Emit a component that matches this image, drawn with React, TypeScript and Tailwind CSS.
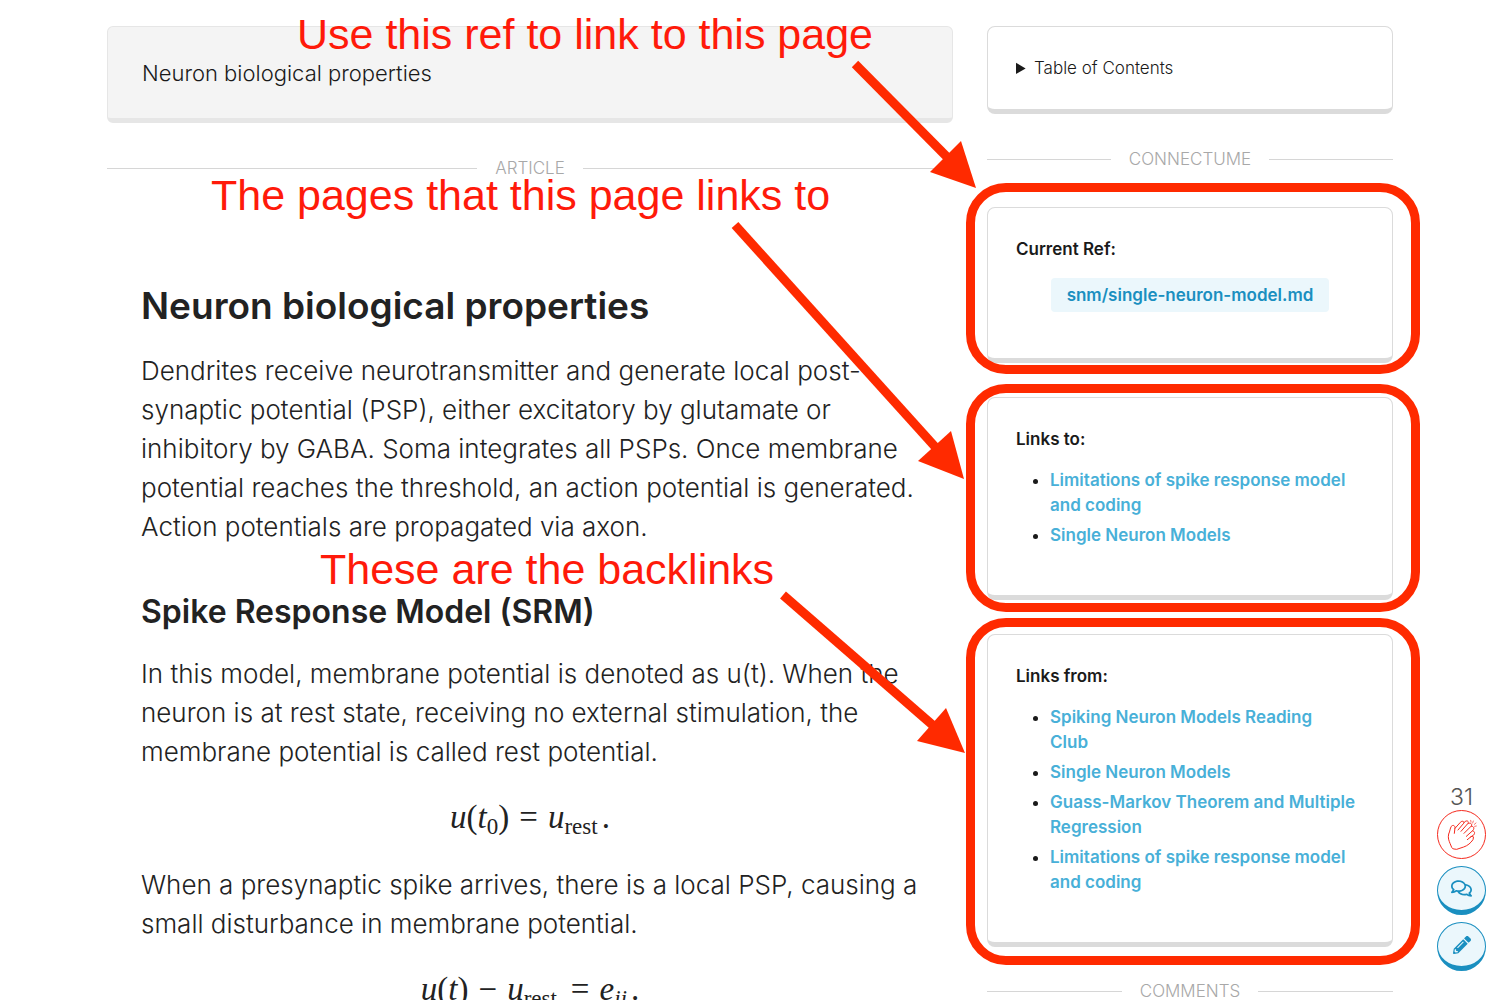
import type { ReactNode } from "react";
import { FaRegComments, FaPencilAlt } from "react-icons/fa";

const RED = "#ff2a00";

function Divider({ label }: { label: string }) {
  return (
    <div className="flex items-center gap-[18px] text-[17px] leading-6 font-light text-[#a8a8a8]">
      <span className="h-px flex-1 bg-[#d6d6d6]" />
      <span>{label}</span>
      <span className="h-px flex-1 bg-[#d6d6d6]" />
    </div>
  );
}

function Card({ children }: { children: ReactNode }) {
  return (
    <section className="rounded-lg border border-b-[5px] border-[#dbdbdb] bg-white px-7 text-[17px] text-[#1a1a1a]">
      {children}
    </section>
  );
}

function Ring({ className }: { className: string }) {
  return (
    <span
      className={`pointer-events-none absolute -right-[27px] -left-[21px] z-10 rounded-[40px] border-[9px] border-[#ff2a00] ${className}`}
    />
  );
}

function LinkCard({ title, links }: { title: string; links: string[] }) {
  return (
    <Card>
      <h4 className="pt-7 leading-[26px] font-semibold">{title}</h4>
      <ul className="mt-4 list-disc space-y-[5px] pb-[47px] pl-[34px]">
        {links.map((l) => (
          <li key={l} className="leading-[25px] whitespace-pre-line">
            <a href="#" className="font-semibold text-[#48b0d8]">
              {l}
            </a>
          </li>
        ))}
      </ul>
    </Card>
  );
}

function Arrow({ shaft, head }: { shaft: string; head: string }) {
  return (
    <g>
      <path d={shaft} stroke={RED} strokeWidth="9" fill="none" />
      <path d={head} fill={RED} />
    </g>
  );
}

function Clap() {
  return (
    <svg viewBox="76 115 96 96" className="size-8" fill="none" stroke="#f52a1e" strokeWidth="3" strokeLinecap="round" strokeLinejoin="round">
      <path d="M101 158L103 141C103 134 96 132 92 137C88 143 88 152 84 160C81 172 85 180 88 188L93 200Q95 205 100 205L108 206L129 199C141 195 150 187 157 177L158 172C160 167 155 165 151 168L140 177" />
      <path d="M103 143L119 125C124 119 132 122 129 128L112 148" />
      <path d="M129 127L133 123C138 118 146 122 142 128L121 152" />
      <path d="M142 129C148 125 156 129 152 136L130 158" />
      <path d="M153 137C159 136 162 143 157 149L137 167" />
      <path d="M157 151C163 152 163 158 159 163L150 169" />
      <path d="M150 119L151 124M158 121L156 127M166 127L161 131M167 136L162 137" strokeWidth="2" />
    </svg>
  );
}

export default function App() {
  return (
    <div className="relative h-screen overflow-hidden bg-white font-['Inter',sans-serif] text-[#363636]">
      <div className="flex gap-[34px] px-[107px] pt-[26px]">
        <main className="min-w-0 flex-1">
          <div className="rounded-md border border-b-[5px] border-[#e6e6e6] bg-[#f4f4f4] px-[34px] pt-7 pb-[27px] text-[22px] leading-[36px] font-light text-[#1a1a1a]">
            Neuron biological properties
          </div>
          <div className="mt-[33px]">
            <Divider label="ARTICLE" />
          </div>
          <article className="px-[34px] pt-[102px] text-[26px] leading-[39px] font-light text-[#222]">
            <h1 className="text-[37px] leading-[48px] font-semibold">Neuron biological properties</h1>
            <p className="mt-[21px]">
              Dendrites receive neurotransmitter and generate local post-
              <br />
              synaptic potential (PSP), either excitatory by glutamate or
              <br />
              inhibitory by GABA. Soma integrates all PSPs. Once membrane
              <br />
              potential reaches the threshold, an action potential is generated.
              <br />
              Action potentials are propagated via axon.
            </p>
            <h2 className="mt-[46px] text-[32px] leading-[40px] font-semibold">Spike Response Model (SRM)</h2>
            <p className="mt-[22px]">
              In this model, membrane potential is denoted as u(t). When the
              <br />
              neuron is at rest state, receiving no external stimulation, the
              <br />
              membrane potential is called rest potential.
            </p>
            <p className="mt-[27px] text-center font-['Liberation_Serif',serif] text-[33px] font-normal">
              <i>u</i>(<i>t</i>
              <sub className="text-[23px]">0</sub>)<span className="mx-[10px]">=</span>
              <i>u</i>
              <sub className="text-[23px]">rest</sub>
              <span className="ml-1">.</span>
            </p>
            <p className="mt-7">
              When a presynaptic spike arrives, there is a local PSP, causing a
              <br />
              small disturbance in membrane potential.
            </p>
            <p className="mt-[27px] text-center font-['Liberation_Serif',serif] text-[33px] font-normal">
              <i>u</i>(<i>t</i>)<span className="mx-[10px]">−</span>
              <i>u</i>
              <sub className="text-[23px]">rest</sub>
              <span className="mr-[10px] ml-[14px]">=</span>
              <i>e</i>
              <sub className="text-[23px] italic">ij</sub>
              <span className="ml-1">.</span>
            </p>
          </article>
        </main>
        <aside className="w-[406px] shrink-0">
          <Card>
            <details className="py-7 leading-[26px] font-light">
              <summary>Table of Contents</summary>
            </details>
          </Card>
          <div className="mt-[33px] mb-9">
            <Divider label="CONNECTUME" />
          </div>
          <div className="relative">
            <Card>
              <h4 className="pt-7 leading-[26px] font-semibold">Current Ref:</h4>
              <div className="mt-4 flex justify-center pb-[46px]">
                <code className="rounded bg-[#ebf7fc] px-4 py-1 font-['Inter',sans-serif] leading-[26px] font-semibold text-[#1a8fc0]">
                  snm/single-neuron-model.md
                </code>
              </div>
            </Card>
            <Ring className="-top-[24px] -bottom-[11px]" />
          </div>
          <div className="relative mt-[34px]">
            <LinkCard title="Links to:" links={["Limitations of spike response model\nand coding", "Single Neuron Models"]} />
            <Ring className="-top-[13px] -bottom-[12px]" />
          </div>
          <div className="relative mt-[34px]">
            <LinkCard
              title="Links from:"
              links={[
                "Spiking Neuron Models Reading\nClub",
                "Single Neuron Models",
                "Guass-Markov Theorem and Multiple\nRegression",
                "Limitations of spike response model\nand coding",
              ]}
            />
            <Ring className="-top-[16px] -bottom-[18px]" />
          </div>
          <div className="mt-8">
            <Divider label="COMMENTS" />
          </div>
        </aside>
      </div>

      <div className="absolute right-[14px] bottom-[29px] flex flex-col items-center gap-[7px]">
        <div className="flex flex-col items-center">
          <span className="text-[23px] leading-[26px] font-light text-[#555]">31</span>
          <button aria-label="Clap" className="grid size-[49px] place-items-center rounded-full border border-[#f52a1e] bg-white">
            <Clap />
          </button>
        </div>
        <button aria-label="Comments" className="grid size-[49px] place-items-center rounded-full border border-b-[5px] border-[#1a8fc0] bg-[#ebf7fc] text-[#1a8fc0]">
          <FaRegComments size={21} />
        </button>
        <button aria-label="Edit" className="grid size-[49px] place-items-center rounded-full border border-b-[5px] border-[#1a8fc0] bg-[#ebf7fc] text-[#1a8fc0]">
          <FaPencilAlt size={18} />
        </button>
      </div>

      <div className="pointer-events-none absolute inset-0 font-['Liberation_Sans',sans-serif] text-[43px] leading-[48px] whitespace-nowrap text-[#ff1a0a]">
        <span className="absolute top-[10px] left-[297px]">Use this ref to link to this page</span>
        <span className="absolute top-[171px] left-[211px]">The pages that this page links to</span>
        <span className="absolute top-[545px] left-[320px]">These are the backlinks</span>
        <svg className="absolute inset-0" width="1500" height="1000">
          <Arrow shaft="M855 64L950 160" head="M961 141L930 172L976 188Z" />
          <Arrow shaft="M735 225L938 450" head="M951 431L918 461L964 479Z" />
          <Arrow shaft="M783 595L936 728" head="M946 708L917 741L965 753Z" />
        </svg>
      </div>
    </div>
  );
}
